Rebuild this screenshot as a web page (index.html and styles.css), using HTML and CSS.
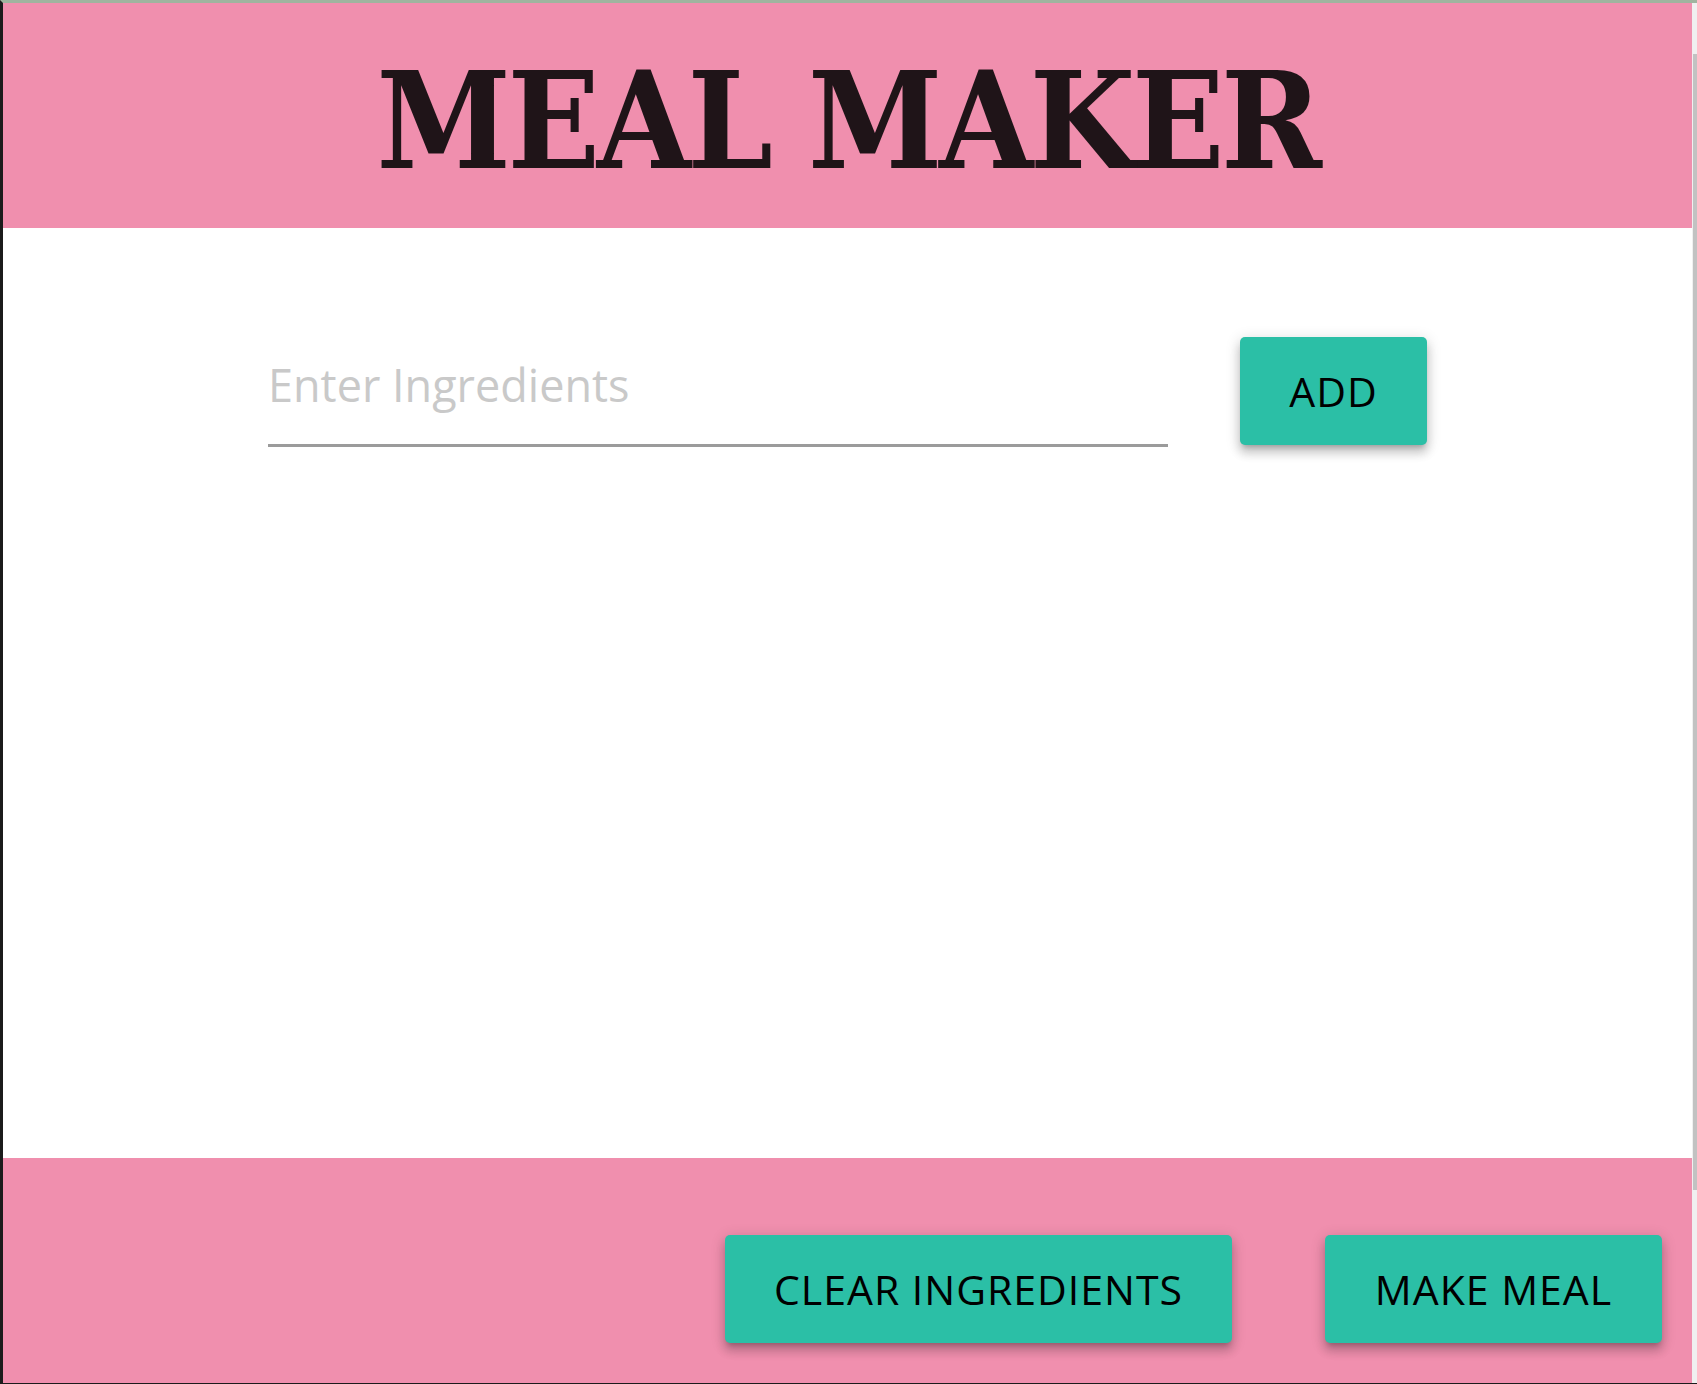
FILE: index.html
```html
<!DOCTYPE html>
<html lang="en">
<head>
<meta charset="utf-8">
<title>Meal Maker</title>
<link rel="stylesheet" href="styles.css">
</head>
<body>
<div class="window">
  <div class="app">
    <header class="header">
      <h1 class="title">MEAL MAKER</h1>
    </header>
    <main class="content">
      <div class="add-row">
        <div class="field">
          <input class="ingredient-input" type="text" placeholder="Enter Ingredients">
        </div>
        <button class="btn btn-add" type="button">ADD</button>
      </div>
    </main>
    <footer class="footer">
      <button class="btn btn-clear" type="button">CLEAR INGREDIENTS</button>
      <button class="btn btn-make" type="button">MAKE MEAL</button>
    </footer>
  </div>
  <div class="scrollbar"><div class="thumb"></div></div>
</div>
</body>
</html>
```
FILE: styles.css
```css
html, body {
  margin: 0;
  padding: 0;
  height: 100%;
}

body {
  background: #1b1b1b;
  font-family: "Open Sans", "Noto Sans", sans-serif;
  overflow: hidden;
}

.window {
  display: flex;
  height: 1384px;
  box-sizing: border-box;
  border-top: 3px solid #9fb49f;
  border-left: 3px solid #1b1b1b;
  border-bottom: 1px solid #1b1b1b;
}

.app {
  flex: 1;
  display: flex;
  flex-direction: column;
  background: #ffffff;
}

.header {
  height: 225px;
  background: #f08fae;
  display: flex;
  align-items: center;
  justify-content: center;
}

.title {
  margin: 0;
  font-family: "DejaVu Serif Condensed", "DejaVu Serif", "Liberation Serif", serif;
  font-weight: bold;
  font-size: 135px;
  line-height: 1;
  letter-spacing: -3.5px;
  color: #1f1418;
  padding-top: 10px;
}

.content {
  flex: 1;
}

.add-row {
  display: flex;
  justify-content: center;
  align-items: flex-start;
  gap: 72px;
  padding-top: 109px;
}

.field {
  width: 900px;
  height: 110px;
  box-sizing: border-box;
  padding-top: 16px;
  border-bottom: 3px solid #9b9b9b;
}

.ingredient-input {
  display: block;
  width: 100%;
  height: 62px;
  padding: 0;
  margin: 0;
  border: none;
  outline: none;
  background: transparent;
  font-family: "Open Sans", "Noto Sans", sans-serif;
  font-size: 45px;
  color: #333;
}

.ingredient-input::placeholder {
  color: #c9c9c9;
  opacity: 1;
}

.btn {
  height: 108px;
  border: none;
  border-radius: 5px;
  background: #2bbfa6;
  color: #000;
  font-family: "Open Sans", "Noto Sans", sans-serif;
  font-size: 41px;
  font-weight: 400;
  letter-spacing: 1px;
  padding: 0;
  box-shadow: 0 5px 5px -3px rgba(0, 0, 0, 0.2),
              0 8px 10px 1px rgba(0, 0, 0, 0.14),
              0 3px 14px 2px rgba(0, 0, 0, 0.12);
  cursor: pointer;
}

.btn-add {
  width: 187px;
}

.btn-clear {
  width: 507px;
}

.btn-make {
  width: 337px;
}

.footer {
  height: 225px;
  box-sizing: border-box;
  background: #f08fae;
  display: flex;
  justify-content: flex-end;
  align-items: flex-start;
  gap: 93px;
  padding-top: 77px;
  padding-right: 30px;
}

.scrollbar {
  width: 5px;
  background: #f0f0f0;
  padding-top: 51px;
  box-sizing: border-box;
}

.thumb {
  margin-left: 1px;
  width: 4px;
  height: 1136px;
  background: #c2c2c2;
}
```
